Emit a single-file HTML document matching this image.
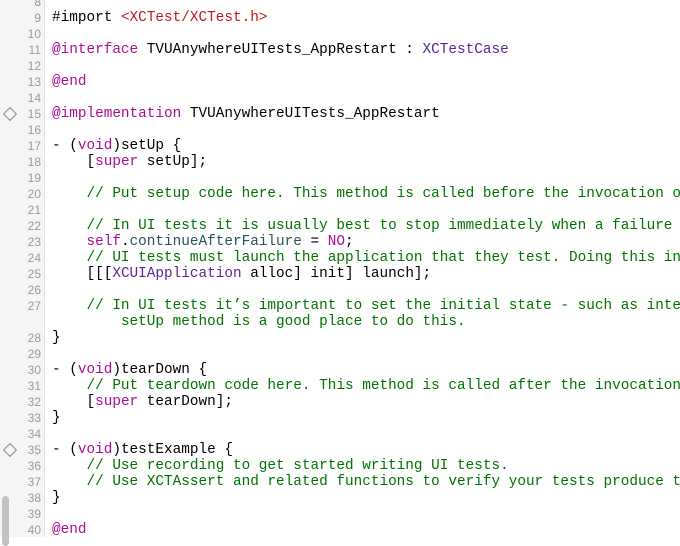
<!DOCTYPE html><html><head><style>
body{margin:0;width:680px;height:537px;overflow:hidden;background:#fff;position:relative;font-family:"Liberation Mono",monospace}
#g{position:absolute;left:0;top:0;width:44px;height:537px;background:#f5f5f5;border-right:1px solid #e2e2e2}
#sb{position:absolute;left:2px;top:496px;width:7px;height:50px;background:#c2c2c2;border-radius:4px}
#L{position:absolute;left:0;top:0;width:680px;height:537px;overflow:hidden}
.r{position:absolute;left:0;width:680px;overflow:hidden;height:16px;line-height:16px;white-space:pre}
.n{position:absolute;left:0;width:41px;text-align:right;font-family:"Liberation Sans",sans-serif;font-size:12px;color:#9a9a9a;line-height:16px}
.c{position:absolute;left:52px;font-size:14.37px;color:#000;line-height:16px}
.k{color:#aa0d91}.s{color:#c41a16}.m{color:#007400}.t{color:#5c2699}.p{color:#2e5257}
.d{position:absolute;left:5px;top:3px;width:8px;height:8px;border:1.5px solid #8a8a8a;transform:rotate(45deg)}
</style></head><body>
<div id="g"></div><div id="sb"></div>
<div id="L"></div>
<script>
var L=[
[8,''],
[9,'#import <span class="s">&lt;XCTest/XCTest.h&gt;</span>'],
[10,''],
[11,'<span class="k">@interface</span> TVUAnywhereUITests_AppRestart : <span class="t">XCTestCase</span>'],
[12,''],
[13,'<span class="k">@end</span>'],
[14,''],
[15,'<span class="k">@implementation</span> TVUAnywhereUITests_AppRestart',1],
[16,''],
[17,'- (<span class="k">void</span>)setUp {'],
[18,'    [<span class="k">super</span> setUp];'],
[19,''],
[20,'    <span class="m">// Put setup code here. This method is called before the invocation of each test method in the class.</span>'],
[21,''],
[22,'    <span class="m">// In UI tests it is usually best to stop immediately when a failure occurs.</span>'],
[23,'    <span class="k">self</span>.<span class="p">continueAfterFailure</span> = <span class="k">NO</span>;'],
[24,'    <span class="m">// UI tests must launch the application that they test. Doing this in setup will make sure it happens for each test method.</span>'],
[25,'    [[[<span class="t">XCUIApplication</span> alloc] init] launch];'],
[26,''],
[27,'    <span class="m">// In UI tests it’s important to set the initial state - such as interface orientation - required for your tests before they run. The</span>'],
['','        <span class="m">setUp method is a good place to do this.</span>'],
[28,'}'],
[29,''],
[30,'- (<span class="k">void</span>)tearDown {'],
[31,'    <span class="m">// Put teardown code here. This method is called after the invocation of each test method in the class.</span>'],
[32,'    [<span class="k">super</span> tearDown];'],
[33,'}'],
[34,''],
[35,'- (<span class="k">void</span>)testExample {',1],
[36,'    <span class="m">// Use recording to get started writing UI tests.</span>'],
[37,'    <span class="m">// Use XCTAssert and related functions to verify your tests produce the correct results.</span>'],
[38,'}'],
[39,''],
[40,'<span class="k">@end</span>']];
var h='';L.forEach(function(l,i){h+='<div class="r" style="top:'+(-6+i*16)+'px">'+(l[2]?'<div class="d"></div>':'')+'<div class="n">'+l[0]+'</div><div class="c">'+l[1]+'</div></div>'});
document.getElementById('L').innerHTML=h;
</script>
</body></html>
